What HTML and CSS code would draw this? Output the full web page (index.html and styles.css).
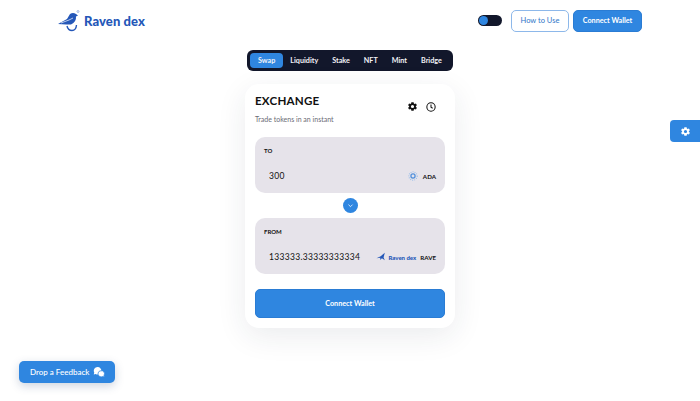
FILE: index.html
```html
<!DOCTYPE html>
<html lang="en">

<head>
    <meta charset="UTF-8">
    <meta name="viewport" content="width=device-width, initial-scale=1.0">
    <title>Raven dex</title>
    <link rel="stylesheet" href="styles.css">
</head>

<body>
    <header class="header">
        <div class="logo">
            <svg class="logo-bird" viewBox="0 0 24 22" width="24" height="22">
                <path fill="#2457b8" d="M0 14 L9 9 L12 4 Q15 2 18 4 L20 5.500 L18 6.500 Q18.500 12 13 14.500 L8 14.500 Z"/>
                <path fill="none" stroke="#fff" stroke-width="0.700" d="M3 13 L11 10 L15 8"/>
                <path fill="none" stroke="#2457b8" stroke-width="1.400" d="M9 16 Q10 20.500 14 20.500 Q18 20.500 18.500 15"/>
                <circle cx="20" cy="1.500" r="1" fill="none" stroke="#6c8fd0" stroke-width="0.600"/>
            </svg>
            <span class="logo-text">Raven dex</span>
        </div>
        <div class="header-right">
            <div class="toggle"><span class="toggle-knob"></span></div>
            <button class="btn-outline">How to Use</button>
            <button class="btn-primary">Connect Wallet</button>
        </div>
    </header>

    <nav class="tabs">
        <span class="tab active">Swap</span>
        <span class="tab">Liquidity</span>
        <span class="tab">Stake</span>
        <span class="tab">NFT</span>
        <span class="tab">Mint</span>
        <span class="tab">Bridge</span>
    </nav>

    <main class="card">
        <div class="card-head">
            <div>
                <h1 class="card-title">EXCHANGE</h1>
                <p class="card-sub">Trade tokens in an instant</p>
            </div>
            <div class="card-icons">
                <svg viewBox="0 0 24 24" width="11" height="11">
                    <path fill="#111" fill-rule="evenodd" d="M19.400 13a7.500 7.500 0 0 0 0-2l2.300-1.800-2.300-3.900-2.700 1.100a7.500 7.500 0 0 0-1.700-1L14.500 2.500h-5L9 5.400a7.500 7.500 0 0 0-1.700 1L4.600 5.300 2.300 9.200 4.600 11a7.500 7.500 0 0 0 0 2l-2.300 1.800 2.300 3.900 2.700-1.100a7.500 7.500 0 0 0 1.700 1l.5 2.900h5l.5-2.900a7.500 7.500 0 0 0 1.700-1l2.700 1.100 2.300-3.900zM12 15.500a3.500 3.500 0 1 1 0-7 3.500 3.500 0 0 1 0 7z"/>
                </svg>
                <svg viewBox="0 0 24 24" width="10" height="10">
                    <circle cx="12" cy="12" r="10" fill="none" stroke="#111" stroke-width="2.500"/>
                    <path fill="none" stroke="#111" stroke-width="2.500" d="M12 6v6.500l4 2.500"/>
                </svg>
            </div>
        </div>

        <section class="panel">
            <div class="panel-label">TO</div>
            <div class="panel-row">
                <span class="amount">300</span>
                <span class="token">
                    <svg viewBox="0 0 24 24" width="10" height="10">
                        <circle cx="12" cy="12" r="5" fill="none" stroke="#4f8fdc" stroke-width="3"/>
                        <circle cx="12" cy="12" r="10" fill="none" stroke="#8db8ea" stroke-width="2.500" stroke-dasharray="2 3"/>
                    </svg>
                    <span class="token-name ada">ADA</span>
                </span>
            </div>
        </section>

        <div class="switch-row">
            <span class="switch">
                <svg viewBox="0 0 12 12" width="7" height="7">
                    <path fill="none" stroke="#fff" stroke-width="1.300" d="M2.500 4.500 L6 8 L9.500 4.500"/>
                </svg>
            </span>
        </div>

        <section class="panel">
            <div class="panel-label">FROM</div>
            <div class="panel-row">
                <span class="amount">133333.33333333334</span>
                <span class="token">
                    <svg viewBox="0 0 24 24" width="11" height="10">
                        <path fill="#2457b8" d="M0 15 L10 10 L20 2 L17 13 L20 20 L13 15 L9 19 L9 14 Z"/>
                    </svg>
                    <span class="token-logo">Raven dex</span>
                    <span class="token-name">RAVE</span>
                </span>
            </div>
        </section>

        <button class="btn-primary btn-wide">Connect Wallet</button>
    </main>

    <button class="side-settings">
        <svg viewBox="0 0 24 24" width="11" height="11">
            <path fill="#fff" fill-rule="evenodd" d="M19.400 13a7.500 7.500 0 0 0 0-2l2.300-1.800-2.300-3.900-2.700 1.100a7.500 7.500 0 0 0-1.700-1L14.500 2.500h-5L9 5.400a7.500 7.500 0 0 0-1.700 1L4.600 5.300 2.300 9.200 4.600 11a7.500 7.500 0 0 0 0 2l-2.300 1.800 2.300 3.900 2.700-1.100a7.500 7.500 0 0 0 1.700 1l.5 2.900h5l.5-2.900a7.500 7.500 0 0 0 1.700-1l2.700 1.100 2.300-3.900zM12 15.500a3.500 3.500 0 1 1 0-7 3.500 3.500 0 0 1 0 7z"/>
        </svg>
    </button>

    <button class="feedback">
        Drop a Feedback
        <svg viewBox="0 0 24 24" width="12" height="12">
            <path fill="#fff" d="M9 2a7.500 7.500 0 0 0-6.500 11L1.500 17l4-1A7.500 7.500 0 1 0 9 2z"/>
            <path fill="#fff" stroke="#2f86e0" stroke-width="1.500" d="M16 9.500a6 6 0 0 0-3 11.200 6 6 0 0 0 6.500.3l3.500 1-1-3.300A6 6 0 0 0 16 9.500z"/>
        </svg>
    </button>
</body>

</html>
```

FILE: styles.css
```css
* {
    box-sizing: border-box;
}

html,
body {
    height: 100%;
}

body {
    margin: 0;
    background: #fff;
    color: #111;
    font-family: Lato, "Noto Sans", sans-serif;
    overflow: hidden;
    position: relative;
}

button {
    font-family: inherit;
    cursor: pointer;
}

.header {
    display: flex;
    justify-content: space-between;
    align-items: center;
    height: 41px;
    padding: 0 58px;
}

.logo {
    display: flex;
    align-items: center;
    gap: 2px;
}

.logo-text {
    color: #2457b8;
    font-size: 13px;
    font-weight: 900;
    letter-spacing: 0.1px;
}

.header-right {
    display: flex;
    align-items: center;
}

.toggle {
    width: 24px;
    height: 11px;
    margin-right: 9px;
    padding: 1px;
    border-radius: 6px;
    background: #12172b;
}

.toggle-knob {
    display: block;
    width: 9px;
    height: 9px;
    border-radius: 50%;
    background: #2f86e0;
}

.btn-outline {
    width: 58px;
    height: 22px;
    margin-right: 4px;
    padding: 0;
    border: 1px solid #8db8ea;
    border-radius: 5px;
    background: #fff;
    color: #2f76c8;
    font-size: 7.500px;
}

.btn-primary {
    width: 69px;
    height: 22px;
    padding: 0;
    border: 1px solid #2a7cd4;
    border-radius: 5px;
    background: #2f86e0;
    color: #fff;
    font-size: 7.200px;
    font-weight: 700;
}

.tabs {
    display: flex;
    align-items: center;
    width: 206px;
    height: 21px;
    margin: 9px auto 0;
    padding: 0 3px;
    border-radius: 6px;
    background: #12172b;
    gap: 14px;
}

.tab {
    color: #f2f3f7;
    font-size: 7.200px;
    font-weight: 700;
}

.tab.active {
    margin-right: -7px;
    padding: 3px 8px;
    border-radius: 4px;
    background: #2f86e0;
}

.card {
    width: 210px;
    margin: 13px auto 0;
    padding: 10px 10px 10px;
    border-radius: 14px;
    background: #fff;
    box-shadow: 0 8px 30px rgba(30, 40, 70, 0.09);
}

.card-head {
    display: flex;
    justify-content: space-between;
    height: 43px;
}

.card-title {
    margin: 0;
    font-size: 11.600px;
    font-weight: 700;
    letter-spacing: 0.2px;
    line-height: 14px;
}

.card-sub {
    margin: 7px 0 0;
    color: #6b6b75;
    font-size: 7px;
    line-height: 9px;
}

.card-icons {
    display: flex;
    gap: 8px;
    margin: 7px 9px 0 0;
    align-items: center;
    height: 11px;
}

.panel {
    height: 56px;
    padding: 10px 9px 0 9px;
    border-radius: 10px;
    background: #e6e3ea;
}

.panel-label {
    font-size: 6px;
    font-weight: 700;
    line-height: 7px;
}

.panel-row {
    display: flex;
    justify-content: space-between;
    align-items: center;
    margin-top: 17px;
    padding-left: 5px;
}

.amount {
    font-size: 8.500px;
    letter-spacing: 0.3px;
}

.token {
    display: flex;
    align-items: center;
    gap: 1px;
}

.token-name {
    margin-left: 3px;
    font-size: 6.200px;
    font-weight: 700;
}

.token-name.ada {
    margin-left: 4px;
}

.token-logo {
    color: #2457b8;
    font-size: 6px;
    font-weight: 900;
}

.switch-row {
    display: flex;
    justify-content: center;
    align-items: center;
    height: 25px;
}

.switch {
    display: flex;
    justify-content: center;
    align-items: center;
    width: 15px;
    height: 15px;
    border-radius: 50%;
    background: #2f86e0;
}

.btn-wide {
    display: block;
    width: 100%;
    height: 29px;
    margin-top: 15px;
}

.side-settings {
    position: absolute;
    top: 120px;
    right: 0;
    display: flex;
    justify-content: center;
    align-items: center;
    width: 30px;
    height: 22px;
    padding: 0;
    border: none;
    border-radius: 4px 0 0 4px;
    background: #2f86e0;
}

.feedback {
    position: absolute;
    left: 19px;
    top: 361px;
    display: flex;
    align-items: center;
    gap: 4px;
    height: 22px;
    padding: 0 10px 0 11px;
    border: none;
    border-radius: 5px;
    background: #2f86e0;
    color: #fff;
    font-size: 8px;
    font-weight: 500;
    box-shadow: 0 3px 10px rgba(30, 60, 110, 0.22);
}
```
